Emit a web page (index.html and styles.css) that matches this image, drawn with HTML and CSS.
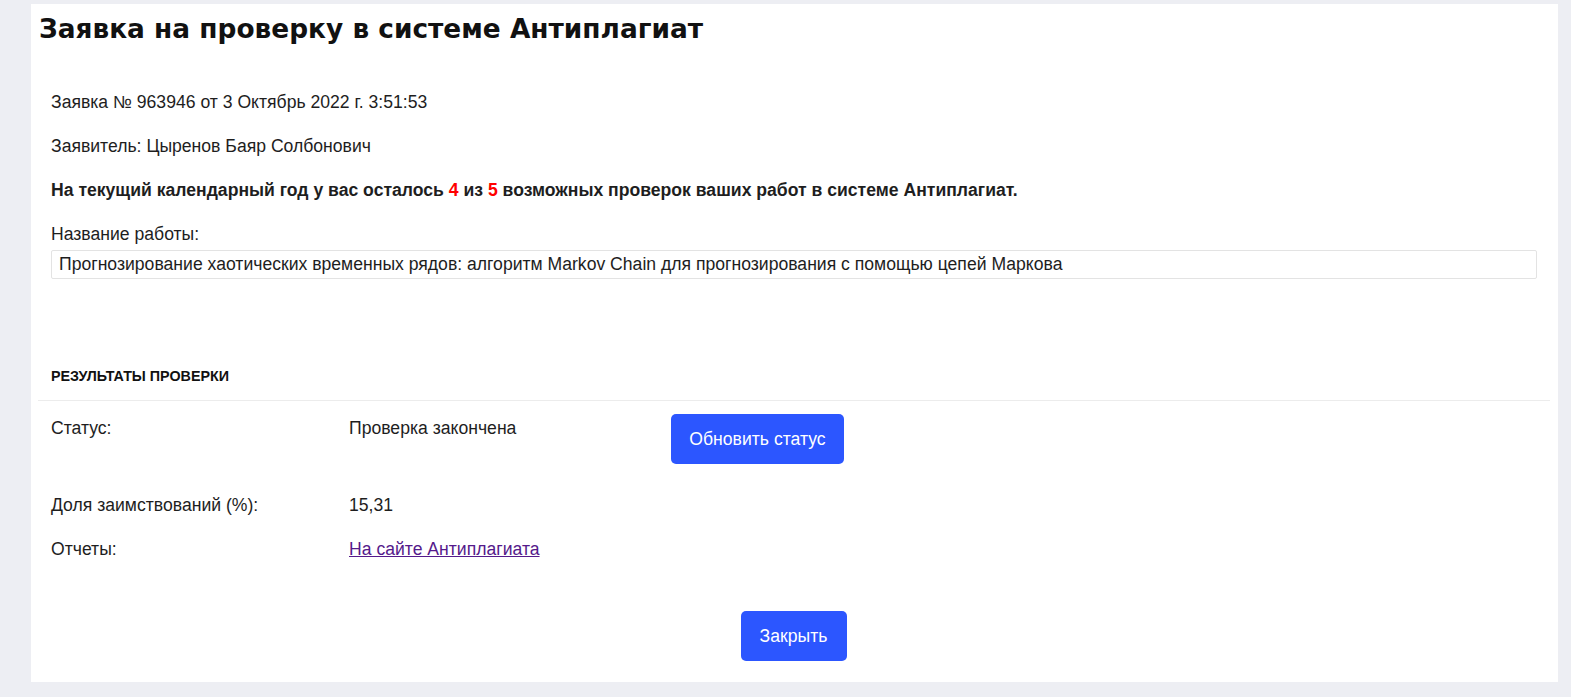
FILE: index.html
```html
<!DOCTYPE html>
<html lang="ru">
<head>
<meta charset="utf-8">
<title>Заявка на проверку в системе Антиплагиат</title>
<link rel="stylesheet" href="styles.css">
</head>
<body>
<div class="card">
  <h1 class="title">Заявка на проверку в системе Антиплагиат</h1>
  <div class="info">
    <p class="line">Заявка № 963946 от 3 Октябрь 2022 г. 3:51:53</p>
    <p class="line">Заявитель: Цыренов Баяр Солбонович</p>
    <p class="line bold">На текущий календарный год у вас осталось <span class="red">4</span> из <span class="red">5</span> возможных проверок ваших работ в системе Антиплагиат.</p>
    <p class="label">Название работы:</p>
    <div class="field">Прогнозирование хаотических временных рядов: алгоритм Markov Chain для прогнозирования с помощью цепей Маркова</div>
  </div>
  <h2 class="section">РЕЗУЛЬТАТЫ ПРОВЕРКИ</h2>
  <div class="divider"></div>
  <div class="results">
    <div class="row first">
      <div class="k">Статус:</div>
      <div class="v">Проверка закончена</div>
      <button class="btn btn-status">Обновить статус</button>
    </div>
    <div class="row">
      <div class="k">Доля заимствований (%):</div>
      <div class="v">15,31</div>
    </div>
    <div class="row">
      <div class="k">Отчеты:</div>
      <div class="v"><a class="link" href="#">На сайте Антиплагиата</a></div>
    </div>
  </div>
  <div class="actions">
    <button class="btn btn-close">Закрыть</button>
  </div>
</div>
</body>
</html>
```

FILE: styles.css
```css
html, body {
  margin: 0;
  padding: 0;
}
body {
  background: #edeef3;
  padding: 4px 13px 16px 31px;
  font-family: "Liberation Sans", Arial, sans-serif;
  font-size: 17.6px;
  color: #1e1e1e;
}
.card {
  background: #ffffff;
  height: 678px;
  box-sizing: border-box;
  padding: 8px 8px 0 7px;
  display: flex;
  flex-direction: column;
}
.title {
  margin: 0 0 0 1px;
  font-family: "DejaVu Sans", Verdana, sans-serif;
  font-weight: bold;
  font-size: 26.4px;
  line-height: 33px;
  color: #111111;
}
.info {
  padding: 47px 13px 0 13px;
  display: flex;
  flex-direction: column;
}
.line {
  margin: 0 0 24px 0;
  line-height: 20px;
}
.bold {
  font-weight: bold;
}
.red {
  color: #ff0000;
}
.label {
  margin: 0 0 6px 0;
  line-height: 20px;
}
.field {
  height: 29px;
  box-sizing: border-box;
  border: 1px solid #e3e3e3;
  border-radius: 2px;
  padding: 3px 7px;
  line-height: 21px;
  color: #1e1e1e;
}
.section {
  margin: 89px 0 0 13px;
  font-size: 14.3px;
  line-height: 17px;
  font-weight: bold;
  color: #111111;
}
.divider {
  margin-top: 15px;
  height: 1px;
  background: #ececec;
}
.results {
  padding: 13px 13px 0 13px;
  display: flex;
  flex-direction: column;
  gap: 24px;
}
.row {
  display: flex;
  align-items: flex-start;
  line-height: 20px;
}
.row.first {
  margin-bottom: 7px;
}
.row .k {
  width: 298px;
  flex: none;
}
.row .v {
  width: 322px;
  flex: none;
}
.row.first .k,
.row.first .v {
  padding-top: 4px;
}
.link {
  color: #551a8b;
  text-decoration: underline;
}
.btn {
  background: #2c56ff;
  color: #ffffff;
  border: none;
  border-radius: 5px;
  height: 50px;
  font-family: "Liberation Sans", Arial, sans-serif;
  font-size: 17.6px;
  cursor: pointer;
}
.btn-status {
  padding: 0;
  width: 173px;
}
.actions {
  display: flex;
  justify-content: center;
  padding-top: 52px;
}
.btn-close {
  width: 106px;
  padding: 0;
  margin-right: 1px;
}
```
